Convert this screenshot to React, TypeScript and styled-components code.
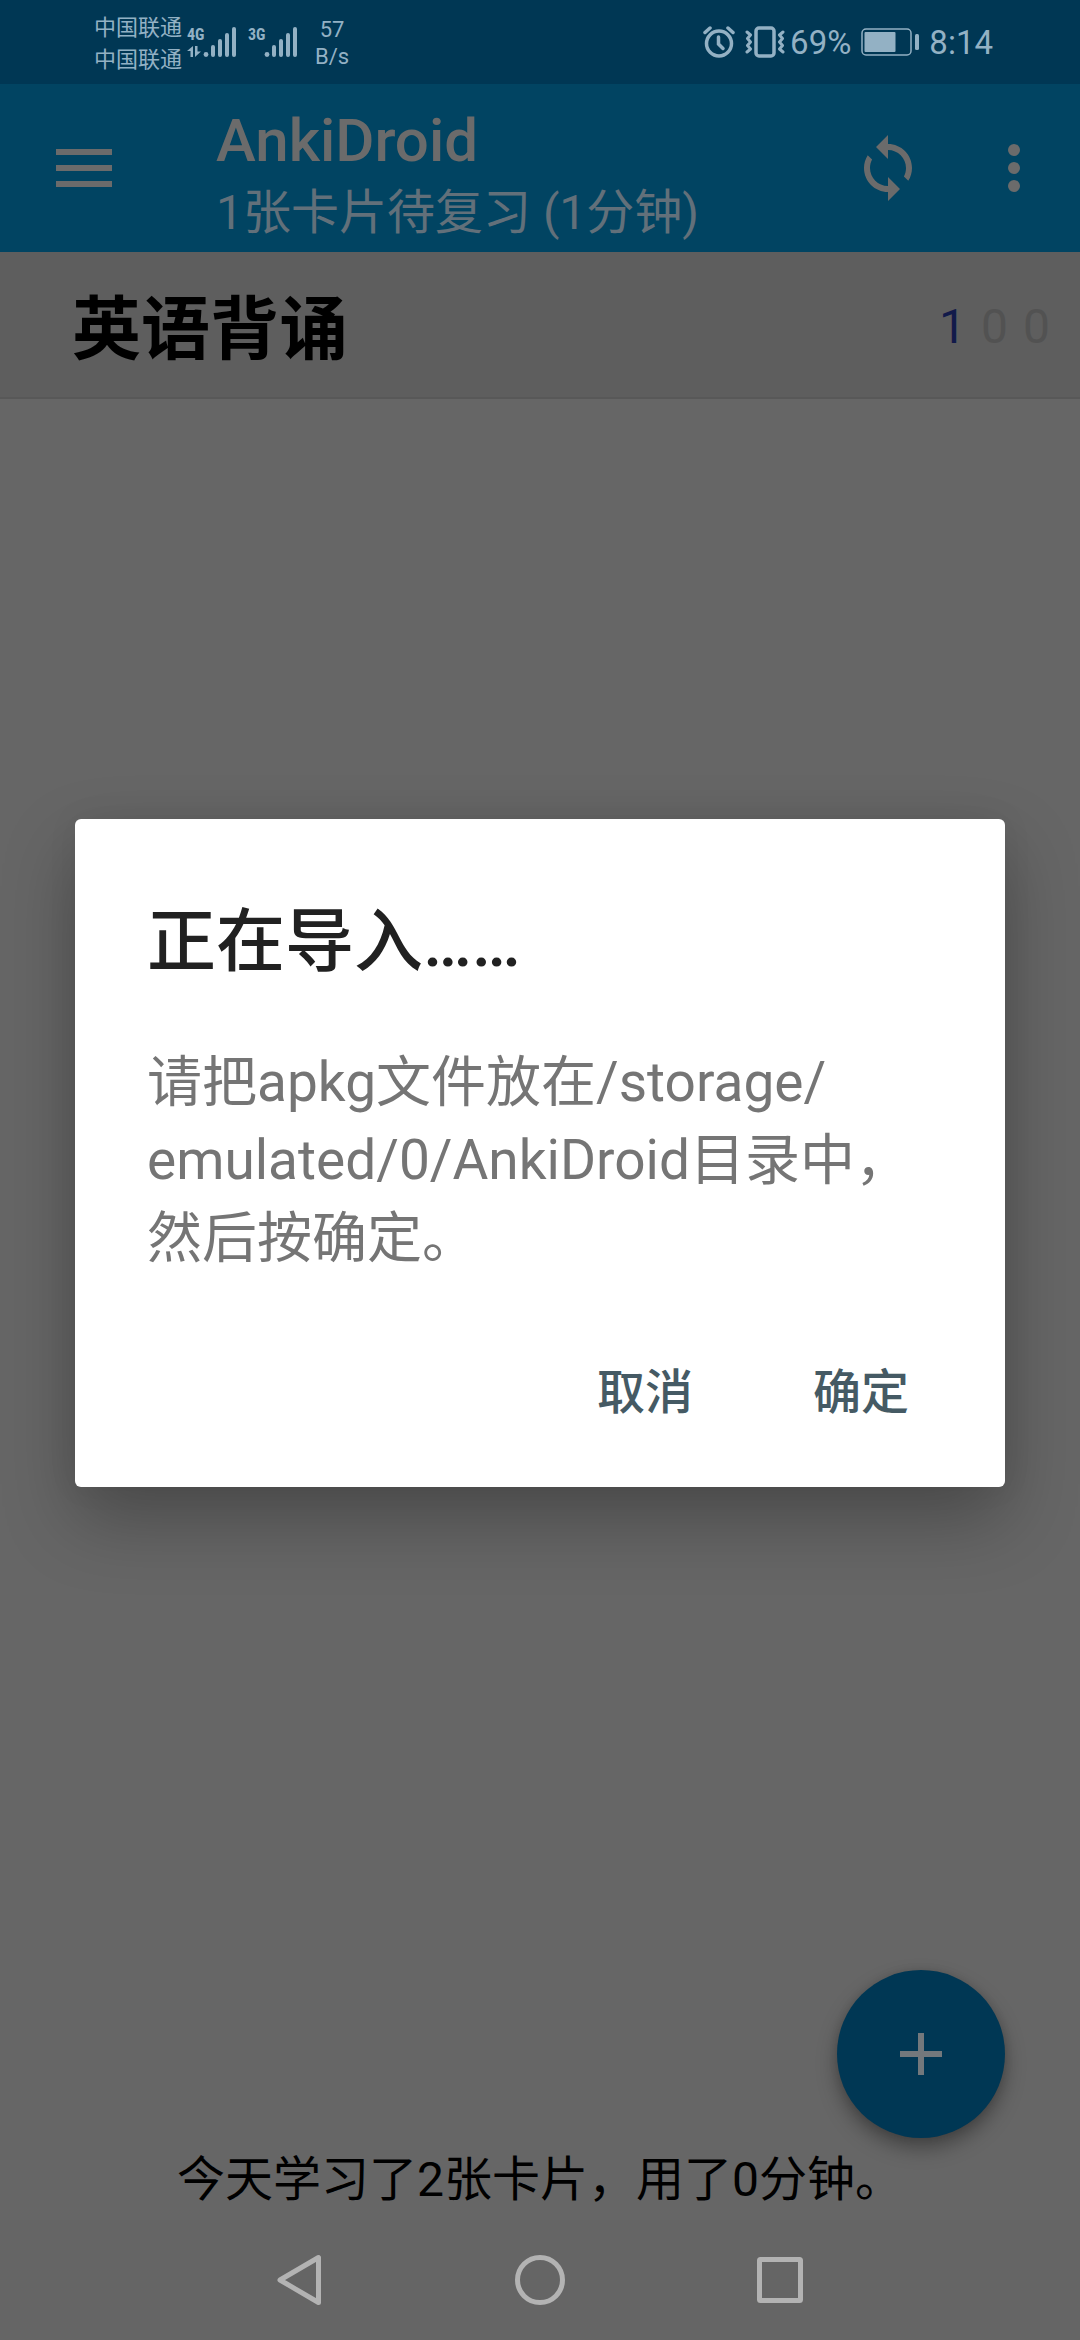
import React from 'react';
import styled, { createGlobalStyle } from 'styled-components';

const color = {
  statusBg: '#003754',
  statusFg: '#93b1c4',
  bar: '#014462',
  barFg: '#6b6b6b',
  barSub: '#62707a',
  page: '#666666',
  row: '#5e5e5e',
  divider: '#585858',
  faded: '#525252',
  fresh: '#121a4a',
  navIcon: '#b3b3b3',
  action: '#455a64',
};

const GlobalStyle = createGlobalStyle`
  *, *::before, *::after { box-sizing: border-box; }
  body {
    margin: 0;
    background: ${color.page};
    font-family: Roboto, "Noto Sans CJK SC", sans-serif;
  }
  h1, h2, p, ul { margin: 0; padding: 0; }
  button {
    margin: 0;
    padding: 0;
    border: 0;
    background: none;
    font: inherit;
    color: inherit;
    cursor: pointer;
  }
  svg { display: block; }
`;

const Screen = styled.div`
  position: relative;
  display: flex;
  flex-direction: column;
  min-height: 100vh;
  background: ${color.page};
`;

const StatusBar = styled.header`
  display: flex;
  align-items: center;
  justify-content: space-between;
  height: 84px;
  padding: 0 87px 0 94px;
  background: ${color.statusBg};
  color: ${color.statusFg};
`;

const StatusGroup = styled.div<{ $gap: number }>`
  display: flex;
  align-items: center;
  gap: ${({ $gap }) => $gap}px;
`;

const Carriers = styled.div`
  display: flex;
  flex-direction: column;
  font-size: 22px;
  line-height: 32px;
  padding-top: 4px;
`;

const Signals = styled.div`
  display: flex;
  gap: 11px;
`;

const Signal = styled.div`
  display: grid;
  width: 50px;
  height: 30px;

  & > * {
    grid-area: 1 / 1;
  }
`;

const SignalLabel = styled.span`
  font-family: "Roboto Condensed", "Liberation Sans Narrow", Roboto, sans-serif;
  font-size: 16px;
  font-weight: 700;
  line-height: 16px;
`;

const Speed = styled.div`
  padding: 2px 0 0 12px;
  font-size: 22px;
  line-height: 27px;
  text-align: center;
`;

const StatusText = styled.span`
  padding-top: 2px;
  font-size: 33px;
  line-height: 40px;
`;

const AppBar = styled.div`
  display: flex;
  align-items: center;
  height: 168px;
  padding-right: 3px;
  background: ${color.bar};
  color: ${color.barFg};
`;

const IconButton = styled.button<{ $width: number }>`
  display: flex;
  align-items: center;
  justify-content: center;
  width: ${({ $width }) => $width}px;
  height: 168px;
`;

const Titles = styled.div`
  flex: 1;
  align-self: flex-end;
  padding: 0 0 3px 48px;
  line-height: 72px;
`;

const AppTitle = styled.h1`
  font-size: 60px;
  font-weight: 500;
  line-height: 72px;
`;

const Subtitle = styled.p`
  font-size: 48px;
  color: ${color.barSub};
`;

const DeckList = styled.ul`
  flex: 1;
  list-style: none;
`;

const Deck = styled.li`
  display: flex;
  align-items: center;
  justify-content: space-between;
  height: 147px;
  padding: 4px 30px 0 72px;
  background: ${color.row};
  border-bottom: 2px solid ${color.divider};
`;

const DeckName = styled.span`
  padding-top: 8px;
  font-size: 69px;
  font-weight: 700;
  line-height: 80px;
  color: #000;
`;

const Counts = styled.div`
  display: flex;
  gap: 15px;
  font-size: 48px;
  line-height: 72px;
`;

const Count = styled.span<{ $fresh?: boolean }>`
  color: ${({ $fresh }) => ($fresh ? color.fresh : color.faded)};
`;

const Summary = styled.p`
  font-size: 48px;
  line-height: 80px;
  text-align: center;
  color: #000;
`;

const Fab = styled.button`
  position: absolute;
  right: 75px;
  bottom: 202px;
  display: flex;
  align-items: center;
  justify-content: center;
  width: 168px;
  height: 168px;
  border-radius: 50%;
  background: ${color.statusBg};
  color: #73787c;
  box-shadow: 0 10px 20px rgba(0, 0, 0, 0.35), 0 0 8px rgba(0, 0, 0, 0.1);
`;

const NavBar = styled.nav`
  display: flex;
  justify-content: center;
  height: 120px;
  background: #656565;
  color: ${color.navIcon};
`;

const NavButton = styled.button`
  display: flex;
  align-items: center;
  justify-content: center;
  width: 240px;
  height: 120px;
`;

const DialogLayer = styled.div`
  position: absolute;
  inset: 84px 0 118px;
  display: flex;
  align-items: center;
  justify-content: center;
  padding: 0 75px;
`;

const Dialog = styled.section`
  width: 100%;
  padding: 84px 48px 40px 72px;
  border-radius: 6px;
  background: #fff;
  box-shadow: 0 32px 72px rgba(0, 0, 0, 0.28), 0 0 32px rgba(0, 0, 0, 0.06);
`;

const DialogTitle = styled.h2`
  font-size: 69px;
  font-weight: 500;
  line-height: 80px;
  color: #212121;
`;

const DialogText = styled.p`
  padding: 60px 24px 62px 0;
  font-size: 55px;
  line-height: 78px;
  color: #757575;
`;

const DialogActions = styled.div`
  display: flex;
  justify-content: flex-end;
  gap: 24px;
`;

const DialogButton = styled.button`
  height: 108px;
  padding: 0 48px;
  font-size: 48px;
  font-weight: 500;
  line-height: 72px;
  color: ${color.action};
`;

function SignalStrength({ label, active }: { label: string; active?: boolean }) {
  return (
    <Signal>
      <svg width="50" height="30" viewBox="0 0 50 30" fill="currentColor" aria-hidden="true">
        <circle cx="19" cy="27.5" r="2.4" />
        <rect x="24" y="18" width="4" height="12" rx="2" />
        <rect x="31" y="12" width="4" height="18" rx="2" />
        <rect x="38" y="6" width="4" height="24" rx="2" />
        <rect x="45" y="0" width="4" height="30" rx="2" />
        {active && <path d="M3.5 30V24H0L6 19V30ZM8 19H10.5V24.500H14L8 30Z" />}
      </svg>
      <SignalLabel>{label}</SignalLabel>
    </Signal>
  );
}

const AlarmIcon = () => (
  <svg width="32" height="32" viewBox="0 0 32 32" fill="none" stroke="currentColor" strokeLinecap="round" aria-hidden="true">
    <circle cx="16" cy="17.500" r="12.500" strokeWidth="3.500" />
    <path d="M15.500 11V18L20 22.500" strokeWidth="3.500" />
    <path d="M2 6.500L7 2M25 2L30 6.500" strokeWidth="3.500" />
  </svg>
);

const VibrateIcon = () => (
  <svg width="40" height="32" viewBox="0 0 40 32" fill="none" stroke="currentColor" strokeLinejoin="round" strokeLinecap="round" aria-hidden="true">
    <rect x="11" y="2" width="18" height="28" rx="3" strokeWidth="3.500" />
    <path d="M2 6L5.500 9L2.500 12.500L5.500 16L2.500 19.500L5.500 23L2 26" strokeWidth="3" />
    <path d="M38 6L34.500 9L37.500 12.500L34.500 16L37.500 19.500L34.500 23L38 26" strokeWidth="3" />
  </svg>
);

const BatteryIcon = () => (
  <svg width="58" height="28" viewBox="0 0 58 28" aria-hidden="true">
    <rect x="1" y="1" width="49" height="26" rx="4" fill="none" stroke="currentColor" strokeWidth="1.500" />
    <rect x="3.500" y="4" width="31" height="20" rx="1" fill="currentColor" />
    <rect x="54" y="6" width="4" height="16" rx="1.500" fill="currentColor" />
  </svg>
);

const MenuIcon = () => (
  <svg width="56" height="38" viewBox="0 0 56 38" fill="currentColor" aria-hidden="true">
    <path d="M0 0H56V6H0ZM0 16H56V22H0ZM0 32H56V38H0Z" />
  </svg>
);

const SyncIcon = () => (
  <svg width="72" height="72" viewBox="0 0 24 24" fill="currentColor" aria-hidden="true">
    <path d="M12 4V1L8 5l4 4V6c3.310 0 6 2.690 6 6 0 1.010-.25 1.970-.7 2.800l1.460 1.460C19.540 15.030 20 13.570 20 12c0-4.420-3.580-8-8-8zm0 14c-3.310 0-6-2.690-6-6 0-1.010.25-1.970.7-2.800L5.240 7.740C4.460 8.970 4 10.430 4 12c0 4.420 3.580 8 8 8v3l4-4-4-4v3z" />
  </svg>
);

const MoreIcon = () => (
  <svg width="72" height="72" viewBox="0 0 24 24" fill="currentColor" aria-hidden="true">
    <circle cx="12" cy="6" r="2" />
    <circle cx="12" cy="12" r="2" />
    <circle cx="12" cy="18" r="2" />
  </svg>
);

const PlusIcon = () => (
  <svg width="42" height="42" viewBox="0 0 42 42" fill="currentColor" aria-hidden="true">
    <path d="M18 0H24V18H42V24H24V42H18V24H0V18H18Z" />
  </svg>
);

const navItems = [
  { label: '返回', shape: <path d="M46.500 5.500V50.500L8 28Z" /> },
  { label: '主屏幕', shape: <circle cx="28" cy="28" r="22.500" /> },
  { label: '最近任务', shape: <rect x="7.500" y="7.500" width="41" height="41" rx="1" /> },
];

export default function App() {
  return (
    <Screen lang="zh-CN">
      <GlobalStyle />
      <StatusBar>
        <StatusGroup $gap={5}>
          <Carriers>
            <span>中国联通</span>
            <span>中国联通</span>
          </Carriers>
          <Signals>
            <SignalStrength label="4G" active />
            <SignalStrength label="3G" />
          </Signals>
          <Speed>
            57
            <br />
            B/s
          </Speed>
        </StatusGroup>
        <StatusGroup $gap={10}>
          <AlarmIcon />
          <StatusGroup $gap={5}>
            <VibrateIcon />
            <StatusText>69%</StatusText>
          </StatusGroup>
          <BatteryIcon />
          <StatusText>8:14</StatusText>
        </StatusGroup>
      </StatusBar>

      <AppBar>
        <IconButton $width={168} aria-label="菜单">
          <MenuIcon />
        </IconButton>
        <Titles>
          <AppTitle>AnkiDroid</AppTitle>
          <Subtitle>1张卡片待复习 (1分钟)</Subtitle>
        </Titles>
        <IconButton $width={126} aria-label="同步">
          <SyncIcon />
        </IconButton>
        <IconButton $width={126} aria-label="更多选项">
          <MoreIcon />
        </IconButton>
      </AppBar>

      <DeckList>
        <Deck>
          <DeckName>英语背诵</DeckName>
          <Counts>
            <Count $fresh>1</Count>
            <Count>0</Count>
            <Count>0</Count>
          </Counts>
        </Deck>
      </DeckList>

      <Summary>今天学习了2张卡片，用了0分钟。</Summary>

      <NavBar>
        {navItems.map(({ label, shape }) => (
          <NavButton key={label} aria-label={label}>
            <svg width="56" height="56" viewBox="0 0 56 56" fill="none" stroke="currentColor" strokeWidth="5" strokeLinejoin="round" aria-hidden="true">
              {shape}
            </svg>
          </NavButton>
        ))}
      </NavBar>

      <Fab aria-label="添加">
        <PlusIcon />
      </Fab>

      <DialogLayer>
        <Dialog role="dialog" aria-modal="true" aria-labelledby="import-title">
          <DialogTitle id="import-title">正在导入……</DialogTitle>
          <DialogText>
            请把apkg文件放在/storage/
            <wbr />
            emulated/0/AnkiDroid目录中，然后按确定。
          </DialogText>
          <DialogActions>
            <DialogButton>取消</DialogButton>
            <DialogButton>确定</DialogButton>
          </DialogActions>
        </Dialog>
      </DialogLayer>
    </Screen>
  );
}
